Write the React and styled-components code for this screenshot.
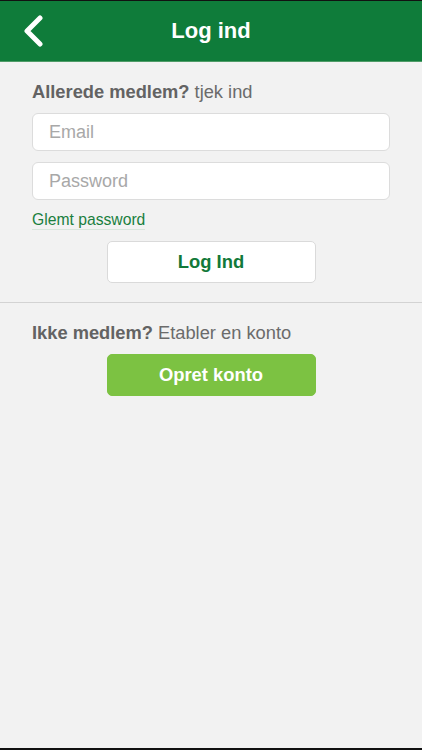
import React from "react";
import styled, { createGlobalStyle } from "styled-components";

const Global = createGlobalStyle`
  html, body { margin: 0; padding: 0; background: #f2f2f2; }
  * { box-sizing: border-box; }
`;

const Screen = styled.div`
  width: 422px;
  height: 750px;
  background: #f2f2f2;
  border-top: 1px solid #111;
  border-bottom: 2px solid #111;
  font-family: "Liberation Sans", Arial, sans-serif;
  display: flex;
  flex-direction: column;
`;

const NavBar = styled.header`
  height: 61px;
  background: #0f7c3a;
  border-bottom: 1px solid #4f9c68;
  display: grid;
  grid-template-columns: 60px 1fr 60px;
  align-items: center;
`;

const BackButton = styled.button`
  background: none;
  border: 0;
  padding: 0 0 0 22px;
  height: 100%;
  display: flex;
  align-items: center;
  cursor: pointer;
`;

const Title = styled.h1`
  margin: 0;
  text-align: center;
  color: #fff;
  font-size: 22px;
  font-weight: bold;
`;

const Section = styled.section`
  padding: ${p => p.$top}px 32px ${p => p.$bottom}px;
  display: flex;
  flex-direction: column;
`;

const Prompt = styled.p`
  margin: 0 0 ${p => p.$gap}px;
  font-size: 18.3px;
  color: #6b6b6b;
  line-height: 20px;
  b { color: #636363; }
`;

const Field = styled.input`
  height: 38px;
  width: 100%;
  border: 1px solid #dcdcdc;
  border-radius: 6px;
  background: #fff;
  padding: 0 16px;
  font-family: inherit;
  font-size: 18px;
  color: #333;
  margin-bottom: 11px;
  outline: none;
  &::placeholder { color: #a8a8a8; }
`;

const ForgotLink = styled.a`
  align-self: flex-start;
  color: #1a7f3f;
  font-size: 15.7px;
  line-height: 18px;
  text-decoration: none;
  border-bottom: 1px solid #d8e6dc;
`;

const ActionButton = styled.button`
  align-self: center;
  width: 209px;
  height: 42px;
  margin-top: ${p => p.$top}px;
  border-radius: 5px;
  font-family: inherit;
  font-size: 18.4px;
  font-weight: bold;
  cursor: pointer;
  background: ${p => (p.$filled ? "#7cc242" : "#fff")};
  color: ${p => (p.$filled ? "#fff" : "#12793a")};
  border: 1px solid ${p => (p.$filled ? "#7cc242" : "#dadada")};
`;

const Divider = styled.hr`
  margin: 0;
  border: 0;
  border-top: 1px solid #d3d3d3;
`;

export default function App() {
  return (
    <>
      <Global />
      <Screen>
        <NavBar>
          <BackButton aria-label="Tilbage">
            <svg width="22" height="32" viewBox="0 0 22 32">
              <path d="M18 3 L5 16 L18 29" fill="none" stroke="#fff" strokeWidth="5" strokeLinecap="round" strokeLinejoin="round" />
            </svg>
          </BackButton>
          <Title>Log ind</Title>
          <span />
        </NavBar>

        <Section $top={20} $bottom={19}>
          <Prompt $gap={11}><b>Allerede medlem?</b> tjek ind</Prompt>
          <Field type="email" placeholder="Email" />
          <Field type="password" placeholder="Password" />
          <ForgotLink href="#">Glemt password</ForgotLink>
          <ActionButton $top={11}>Log Ind</ActionButton>
        </Section>

        <Divider />

        <Section $top={20} $bottom={0}>
          <Prompt $gap={11}><b>Ikke medlem?</b> Etabler en konto</Prompt>
          <ActionButton $top={0} $filled>Opret konto</ActionButton>
        </Section>
      </Screen>
    </>
  );
}
